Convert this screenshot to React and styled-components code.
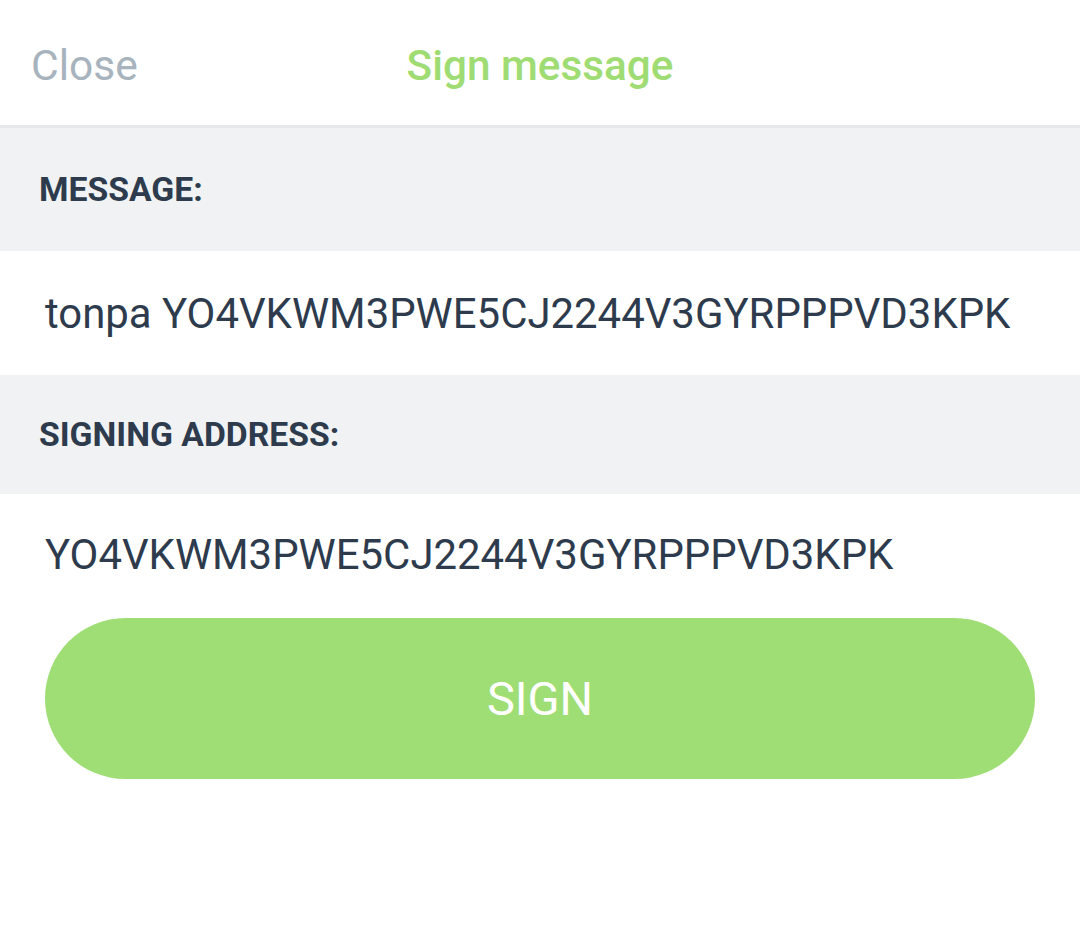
import styled, { createGlobalStyle } from 'styled-components';

const GlobalStyle = createGlobalStyle`
  body {
    margin: 0;
    background: #fff;
    font-family: Roboto, "Liberation Sans", sans-serif;
  }
`;

const Screen = styled.div`
  width: 1080px;
  min-height: 935px;
  background: #fff;
`;

const Header = styled.div`
  display: grid;
  grid-template-columns: 1fr auto 1fr;
  align-items: center;
  height: 119px;
  padding-top: 6px;
  border-bottom: 3px solid #e6e9ec;
`;

const CloseButton = styled.button`
  justify-self: start;
  margin-left: 31px;
  padding: 0;
  border: none;
  background: none;
  font-family: inherit;
  font-size: 42.5px;
  color: #a7b3bd;
`;

const Title = styled.h1`
  margin: 0;
  font-size: 42.3px;
  font-weight: 500;
  color: #9fdc73;
`;

const LabelRow = styled.div`
  display: flex;
  align-items: center;
  height: ${(p) => p.h}px;
  padding-left: 39px;
  background: #f0f2f4;
  font-size: 33.7px;
  font-weight: 700;
  color: #2d3b4d;
`;

const ValueRow = styled.div`
  display: flex;
  align-items: center;
  height: ${(p) => p.h}px;
  padding-left: 45px;
  font-size: 41.9px;
  color: #2d3b4d;
`;

const SignButton = styled.button`
  display: block;
  width: 990px;
  height: 161px;
  margin: 4px 45px 0;
  border: none;
  border-radius: 81px;
  background: #9fde74;
  font-family: inherit;
  font-size: 47px;
  color: #fff;
`;

export default function App() {
  return (
    <Screen>
      <GlobalStyle />
      <Header>
        <CloseButton>Close</CloseButton>
        <Title>Sign message</Title>
        <span />
      </Header>
      <LabelRow h={123}>MESSAGE:</LabelRow>
      <ValueRow h={124}>tonpa YO4VKWM3PWE5CJ2244V3GYRPPPVD3KPK</ValueRow>
      <LabelRow h={119}>SIGNING ADDRESS:</LabelRow>
      <ValueRow h={120}>YO4VKWM3PWE5CJ2244V3GYRPPPVD3KPK</ValueRow>
      <SignButton>SIGN</SignButton>
    </Screen>
  );
}
